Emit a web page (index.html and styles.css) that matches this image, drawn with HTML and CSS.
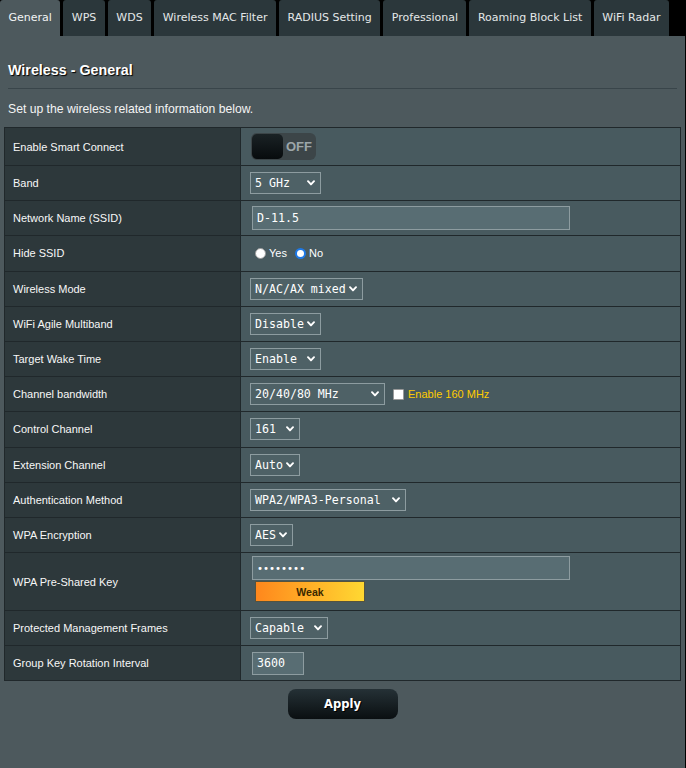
FILE: index.html
```html
<!DOCTYPE html>
<html lang="en">
<head>
<meta charset="utf-8">
<title>Wireless - General</title>
<link rel="stylesheet" href="styles.css">
</head>
<body>
<div class="page">
  <nav class="tabs">
    <div class="tab active">General</div>
    <div class="tab">WPS</div>
    <div class="tab">WDS</div>
    <div class="tab">Wireless MAC Filter</div>
    <div class="tab">RADIUS Setting</div>
    <div class="tab">Professional</div>
    <div class="tab">Roaming Block List</div>
    <div class="tab">WiFi Radar</div>
  </nav>
  <main class="main">
    <h1 class="title">Wireless - General</h1>
    <div class="split"></div>
    <p class="desc">Set up the wireless related information below.</p>

    <div class="form">
      <div class="row first">
        <div class="lbl">Enable Smart Connect</div>
        <div class="val">
          <div class="toggle"><span class="knob"></span><span class="off">OFF</span></div>
        </div>
      </div>
      <div class="row">
        <div class="lbl">Band</div>
        <div class="val">
          <div class="sel sel-band"><span>5 GHz</span><svg class="chev" viewBox="0 0 8 6"><path d="M1 1.2 L4 4.4 L7 1.2"/></svg></div>
        </div>
      </div>
      <div class="row">
        <div class="lbl">Network Name (SSID)</div>
        <div class="val">
          <div class="inp inp-wide">D-11.5</div>
        </div>
      </div>
      <div class="row">
        <div class="lbl">Hide SSID</div>
        <div class="val">
          <span class="radio"></span><span class="rtext">Yes</span>
          <span class="radio on"></span><span class="rtext">No</span>
        </div>
      </div>
      <div class="row">
        <div class="lbl">Wireless Mode</div>
        <div class="val">
          <div class="sel sel-mode"><span>N/AC/AX mixed</span><svg class="chev" viewBox="0 0 8 6"><path d="M1 1.2 L4 4.4 L7 1.2"/></svg></div>
        </div>
      </div>
      <div class="row">
        <div class="lbl">WiFi Agile Multiband</div>
        <div class="val">
          <div class="sel sel-band"><span>Disable</span><svg class="chev" viewBox="0 0 8 6"><path d="M1 1.2 L4 4.4 L7 1.2"/></svg></div>
        </div>
      </div>
      <div class="row">
        <div class="lbl">Target Wake Time</div>
        <div class="val">
          <div class="sel sel-band"><span>Enable</span><svg class="chev" viewBox="0 0 8 6"><path d="M1 1.2 L4 4.4 L7 1.2"/></svg></div>
        </div>
      </div>
      <div class="row">
        <div class="lbl">Channel bandwidth</div>
        <div class="val">
          <div class="sel sel-bw"><span>20/40/80 MHz</span><svg class="chev" viewBox="0 0 8 6"><path d="M1 1.2 L4 4.4 L7 1.2"/></svg></div>
          <span class="check"></span><span class="note">Enable 160 MHz</span>
        </div>
      </div>
      <div class="row">
        <div class="lbl">Control Channel</div>
        <div class="val">
          <div class="sel sel-ch"><span>161</span><svg class="chev" viewBox="0 0 8 6"><path d="M1 1.2 L4 4.4 L7 1.2"/></svg></div>
        </div>
      </div>
      <div class="row">
        <div class="lbl">Extension Channel</div>
        <div class="val">
          <div class="sel sel-ch"><span>Auto</span><svg class="chev" viewBox="0 0 8 6"><path d="M1 1.2 L4 4.4 L7 1.2"/></svg></div>
        </div>
      </div>
      <div class="row">
        <div class="lbl">Authentication Method</div>
        <div class="val">
          <div class="sel sel-auth"><span>WPA2/WPA3-Personal</span><svg class="chev" viewBox="0 0 8 6"><path d="M1 1.2 L4 4.4 L7 1.2"/></svg></div>
        </div>
      </div>
      <div class="row">
        <div class="lbl">WPA Encryption</div>
        <div class="val">
          <div class="sel sel-enc"><span>AES</span><svg class="chev" viewBox="0 0 8 6"><path d="M1 1.2 L4 4.4 L7 1.2"/></svg></div>
        </div>
      </div>
      <div class="row tall">
        <div class="lbl">WPA Pre-Shared Key</div>
        <div class="val val-stack">
          <div class="inp inp-wide dots">••••••••</div>
          <div class="strength">Weak</div>
        </div>
      </div>
      <div class="row">
        <div class="lbl">Protected Management Frames</div>
        <div class="val">
          <div class="sel sel-pmf"><span>Capable</span><svg class="chev" viewBox="0 0 8 6"><path d="M1 1.2 L4 4.4 L7 1.2"/></svg></div>
        </div>
      </div>
      <div class="row">
        <div class="lbl">Group Key Rotation Interval</div>
        <div class="val">
          <div class="inp inp-num">3600</div>
        </div>
      </div>
    </div>

    <div class="actions"><button class="apply" type="button">Apply</button></div>
  </main>
</div>
</body>
</html>
```

FILE: styles.css
```css
* { box-sizing: border-box; }

html, body {
  margin: 0;
  padding: 0;
  background: #000;
}

body {
  font-family: "Liberation Sans", Arial, sans-serif;
  color: #fff;
}

.page {
  width: 685px;
  min-height: 768px;
  display: flex;
  flex-direction: column;
}

/* ---------- tabs ---------- */
.tabs {
  display: flex;
  gap: 3px;
  height: 36px;
  background: #000;
}

.tab {
  height: 36px;
  padding: 0 8.5px;
  line-height: 35px;
  background: #2B373B;
  color: #E4E7E8;
  font-family: "DejaVu Sans", Verdana, sans-serif;
  font-size: 11px;
  border-radius: 3px 3px 0 0;
  white-space: nowrap;
}

.tab.active {
  background: #4D595D;
  color: #F2F4F4;
}

/* ---------- main ---------- */
.main {
  flex: 1;
  background: #4D595D;
  padding-top: 25px;
}

.title {
  margin: 0 0 0 8px;
  font-size: 14.3px;
  line-height: 18px;
  font-weight: bold;
  color: #fff;
  text-shadow: 1px 1px 1px #000;
}

.split {
  margin: 9px 0 0 8px;
  width: 669px;
  height: 1px;
  background: #39454A;
}

.desc {
  margin: 13px 0 0 8px;
  font-size: 12.2px;
  line-height: 15px;
  color: #F4F4F4;
}

/* ---------- form table ---------- */
.form {
  margin: 10px 0 0 4px;
  width: 677px;
  border: 1px solid #20282B;
  border-bottom: none;
}

.row {
  display: grid;
  grid-template-columns: 236px 1fr;
  height: 35.2px;
  border-bottom: 1px solid #20282B;
}

.row.first { height: 38px; }
.row.tall { height: 58px; }

.lbl {
  background: #2D383B;
  border-right: 1px solid #20282B;
  padding-left: 8px;
  display: flex;
  align-items: center;
  font-size: 11px;
  color: #F7F7F7;
}

.val {
  background: #485A5F;
  padding-left: 9px;
  display: flex;
  align-items: center;
}

.val-stack {
  flex-direction: column;
  align-items: flex-start;
  padding-top: 3px;
}

/* toggle */
.toggle {
  width: 65px;
  height: 27px;
  margin-left: 1px;
  border-radius: 6px;
  background: #3C4548;
  padding: 1px;
  display: flex;
}

.knob {
  width: 31px;
  border-radius: 5px;
  background: linear-gradient(#1A2225, #070B0D);
}

.off {
  flex: 1;
  display: flex;
  align-items: center;
  justify-content: center;
  font-weight: bold;
  font-size: 13px;
  color: #9DA6A9;
}

/* select */
.sel {
  height: 22px;
  border: 1px solid #8D9CA0;
  background: #4E6166;
  display: flex;
  align-items: center;
  justify-content: space-between;
  padding: 0 5px 0 4px;
  font-family: "DejaVu Sans Mono", "Liberation Mono", monospace;
  font-size: 11.6px;
  color: #fff;
  white-space: pre;
}

.sel-band { width: 71px; }
.sel-mode { width: 113px; }
.sel-bw { width: 135px; }
.sel-ch { width: 50px; }
.sel-auth { width: 156px; }
.sel-enc { width: 43px; }
.sel-pmf { width: 78px; }

.chev {
  width: 8px;
  height: 6px;
  flex: none;
}

.chev path {
  fill: none;
  stroke: #fff;
  stroke-width: 1.9;
  stroke-linecap: round;
  stroke-linejoin: round;
}

/* text inputs */
.inp {
  height: 24px;
  margin-left: 2px;
  border: 1px solid #8D9CA0;
  background: #586D73;
  padding-left: 4px;
  display: flex;
  align-items: center;
  font-family: "DejaVu Sans Mono", "Liberation Mono", monospace;
  font-size: 11.6px;
  color: #fff;
}

.inp-wide { width: 318px; }
.inp-num { width: 52px; height: 23px; }

.dots {
  font-size: 10px;
  letter-spacing: 0;
}

.strength {
  width: 110px;
  height: 21px;
  margin: 1px 0 0 5px;
  border: 1px solid #55533F;
  background: linear-gradient(90deg, #FF871C, #FFD832);
  display: flex;
  align-items: center;
  justify-content: center;
  font-size: 10.6px;
  font-weight: bold;
  color: #3A2800;
}

/* radios */
.radio {
  width: 11px;
  height: 11px;
  border-radius: 50%;
  background: #fff;
  border: 1px solid #9A9A9A;
  margin: 0 3px 0 5px;
  flex: none;
}

.radio.on {
  border: 2.5px solid #1D78E6;
}

.rtext {
  font-size: 11px;
  margin-right: 3px;
}

/* checkbox */
.check {
  width: 11px;
  height: 11px;
  margin: 0 4px 0 8px;
  background: #fff;
  border: 1px solid #9A9A9A;
  border-radius: 1px;
  flex: none;
}

.note {
  font-size: 11px;
  color: #FFCC00;
}

/* apply */
.actions {
  display: flex;
  justify-content: center;
  margin-top: 8px;
}

.apply {
  width: 110px;
  height: 30px;
  border: none;
  border-radius: 8px;
  background: linear-gradient(#253136, #0A0F11);
  color: #fff;
  font-family: "DejaVu Sans", Verdana, sans-serif;
  font-size: 11.5px;
  font-weight: bold;
  text-shadow: 1px 1px 0 #000;
  padding: 0;
}
```
